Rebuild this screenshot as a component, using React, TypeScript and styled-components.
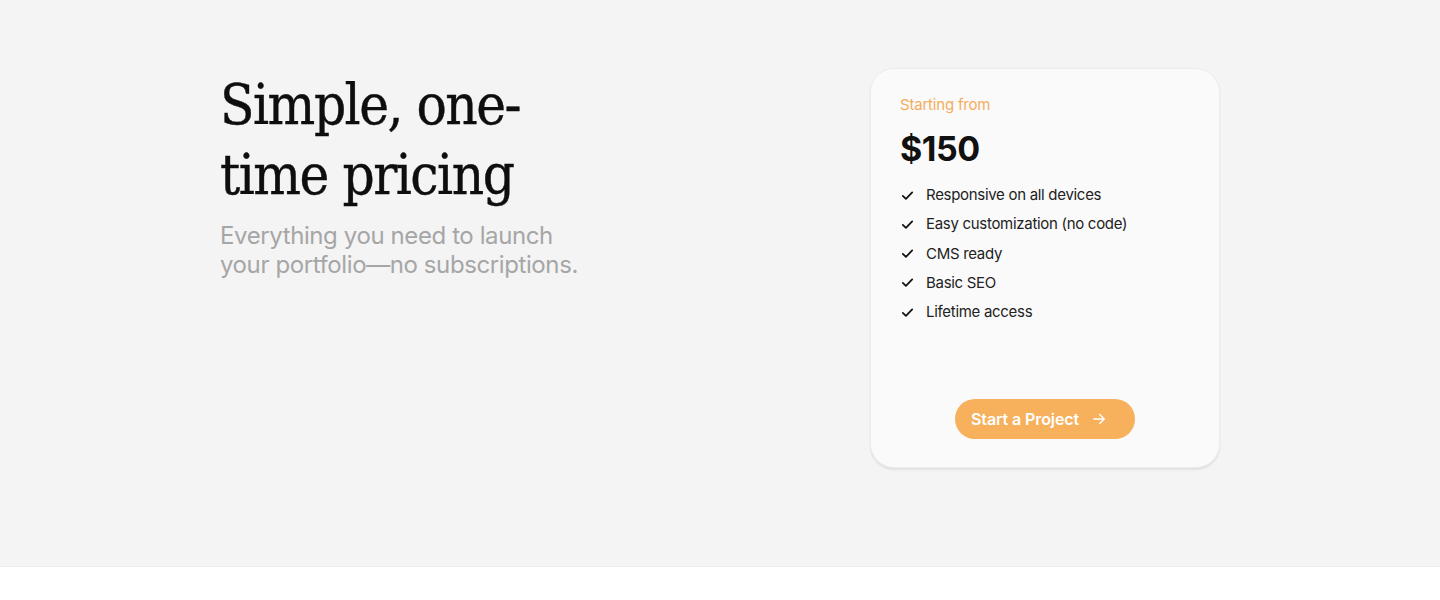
import React from "react";
import styled, { createGlobalStyle } from "styled-components";

const Global = createGlobalStyle`
  html, body { margin: 0; padding: 0; background: #ffffff; }
  * { box-sizing: border-box; }
`;

const Section = styled.section`
  background: #f4f4f4;
  height: 567px;
  padding-top: 68px;
  border-bottom: 1px solid #ededed;
`;

const Container = styled.div`
  width: 1000px;
  margin: 0 auto;
  display: flex;
  justify-content: space-between;
  align-items: flex-start;
`;

const Intro = styled.div`
  display: flex;
  flex-direction: column;
  padding-top: 2px;
`;

const Title = styled.h1`
  margin: 0;
  font-family: "DejaVu Serif Condensed", "DejaVu Serif", serif;
  font-stretch: condensed;
  font-weight: 400;
  font-size: 56px;
  line-height: 70px;
  color: #0e0e0e;
  width: 380px;
  letter-spacing: -1.5px;
  -webkit-text-stroke: 0.4px #0e0e0e;
`;

const Subtitle = styled.p`
  margin: 11px 0 0;
  font-family: Inter, "Noto Sans", sans-serif;
  font-size: 24px;
  line-height: 29px;
  color: #a6a6a6;
  letter-spacing: -0.4px;
  width: 380px;
`;

const Card = styled.div`
  width: 350px;
  height: 400px;
  background: #fafafa;
  border: 1px solid #ececec;
  border-radius: 24px;
  box-shadow: 0 2px 2px rgba(0, 0, 0, 0.08);
  padding: 26px 29px 28px 29px;
  display: flex;
  flex-direction: column;
  font-family: Inter, "Noto Sans", sans-serif;
`;

const Eyebrow = styled.div`
  color: #f5ad5a;
  font-size: 15px;
  line-height: 20px;
  letter-spacing: -0.2px;
`;

const Price = styled.div`
  margin-top: 14px;
  font-size: 34px;
  line-height: 40px;
  font-weight: 700;
  color: #111111;
  letter-spacing: -0.5px;
`;

const Features = styled.ul`
  list-style: none;
  margin: 16px 0 0;
  padding: 0;
  display: flex;
  flex-direction: column;
  gap: 9.25px;
`;

const Feature = styled.li`
  display: flex;
  align-items: center;
  gap: 11px;
  font-size: 15px;
  line-height: 20px;
  color: #222222;
  letter-spacing: -0.3px;
`;

const Check = styled.svg`
  width: 15px;
  height: 15px;
  flex: none;
`;

const Button = styled.button`
  margin: auto auto 0;
  width: 180px;
  height: 40px;
  border: none;
  border-radius: 999px;
  background: #f7b05c;
  color: #ffffff;
  font-family: Inter, "Noto Sans", sans-serif;
  font-weight: 600;
  font-size: 16px;
  letter-spacing: -0.1px;
  display: flex;
  align-items: center;
  justify-content: flex-start;
  gap: 11px;
  padding: 0 0 0 16px;
  cursor: pointer;
`;

const Arrow = styled.svg`
  width: 18px;
  height: 18px;
`;

const features = [
  "Responsive on all devices",
  "Easy customization (no code)",
  "CMS ready",
  "Basic SEO",
  "Lifetime access",
];

export default function App() {
  return (
    <>
      <Global />
      <Section>
        <Container>
          <Intro>
            <Title>Simple, one-time pricing</Title>
            <Subtitle>Everything you need to launch your portfolio—no subscriptions.</Subtitle>
          </Intro>
          <Card>
            <Eyebrow>Starting from</Eyebrow>
            <Price>$150</Price>
            <Features>
              {features.map((f) => (
                <Feature key={f}>
                  <Check viewBox="0 0 24 24" fill="none" stroke="#111" strokeWidth="2.8" strokeLinecap="round" strokeLinejoin="round">
                    <path d="M4.5 12.5l5 5L19.5 7" />
                  </Check>
                  {f}
                </Feature>
              ))}
            </Features>
            <Button>
              Start a Project
              <Arrow viewBox="0 0 24 24" fill="none" stroke="#fff" strokeWidth="2" strokeLinecap="round" strokeLinejoin="round">
                <path d="M5 12h14M13 6l6 6-6 6" />
              </Arrow>
            </Button>
          </Card>
        </Container>
      </Section>
    </>
  );
}
